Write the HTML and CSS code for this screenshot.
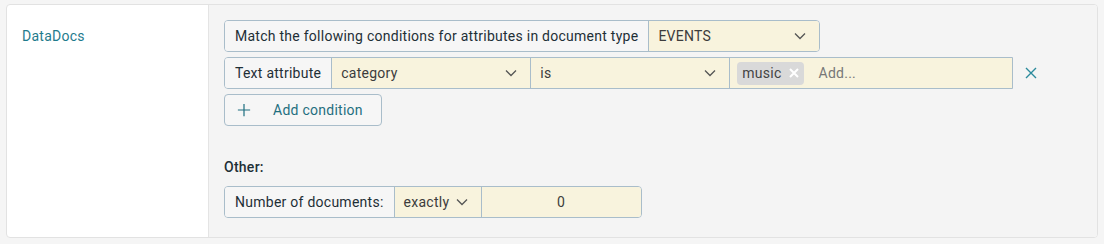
FILE: index.html
```html
<!DOCTYPE html>
<html>
<head>
    <title>DataDocs conditions</title>
    <link rel="stylesheet" href="styles.css">
</head>
<body>
    <div class="card">
        <div class="side">
            <a class="side-link" href="#">DataDocs</a>
        </div>
        <div class="main">
            <div class="group">
                <span class="addon addon-wide">Match the following conditions for attributes in document type</span>
                <span class="select select-type">EVENTS
                    <svg class="chev" viewBox="0 0 12 8"><path d="M1 1.5l5 5 5-5"/></svg>
                </span>
            </div>
            <div class="cond-row">
                <div class="group">
                    <span class="addon">Text attribute</span>
                    <span class="select select-attr">category
                        <svg class="chev" viewBox="0 0 12 8"><path d="M1 1.5l5 5 5-5"/></svg>
                    </span>
                    <span class="select select-attr">is
                        <svg class="chev" viewBox="0 0 12 8"><path d="M1 1.5l5 5 5-5"/></svg>
                    </span>
                    <span class="tags">
                        <span class="tag">music
                            <svg class="tag-x" viewBox="0 0 10 10"><path d="M1 1l8 8M9 1l-8 8"/></svg>
                        </span>
                        <span class="placeholder">Add...</span>
                    </span>
                </div>
                <svg class="remove" viewBox="0 0 12 12"><path d="M1 1l10 10M11 1l-10 10"/></svg>
            </div>
            <button class="btn-add">
                <svg class="plus" viewBox="0 0 16 16"><path d="M8 1v14M1 8h14"/></svg>
                Add condition
            </button>
            <div class="other-title">Other:</div>
            <div class="group">
                <span class="addon">Number of documents:</span>
                <span class="select select-count">exactly
                    <svg class="chev" viewBox="0 0 12 8"><path d="M1 1.5l5 5 5-5"/></svg>
                </span>
                <span class="num">0</span>
            </div>
        </div>
    </div>
</body>
</html>
```

FILE: styles.css
```css
body {
    margin: 0; background-color: #f5f5f5;
    font-family: Roboto, "Liberation Sans", sans-serif;
    font-size: 14px; letter-spacing: 0.26px; color: #1e2f36;
}
.card {
    display: flex; margin: 4px 6px 5px 6px; height: 232px;
    border: 1px solid #e2e2e2; border-radius: 4px;
    background-color: #fff; overflow: hidden;
}
.side {
    width: 202px; border-right: 1px solid #e4e4e4;
    padding: 15px 0 0 15px; box-sizing: border-box;
}
.side-link {
    display: block; line-height: 32px;
    color: #1f7b8d; text-decoration: none;
}
.main {
    flex: 1; background-color: #f4f4f4;
    padding: 15px 15px 0 15px;
}
.group {
    display: inline-flex; height: 32px;
    border: 1px solid #a9bdca; border-radius: 4px;
    box-sizing: border-box; overflow: hidden;
}
.addon {
    display: flex; align-items: center;
    padding: 0 10px; background-color: #f6f6f6;
    white-space: nowrap;
}
.select, .tags, .num {
    display: flex; align-items: center;
    background-color: #f8f3dd; border-left: 1px solid #a9bdca;
    color: #3c3c3c; box-sizing: border-box;
}
.select { padding: 0 13px 0 9px; justify-content: space-between; }
.select-type { width: 171px; }
.select-attr { width: 199px; }
.select-count { width: 87px; }
.chev {
    width: 12px; height: 8px; fill: none;
    stroke: #555; stroke-width: 1.3;
}
.cond-row { display: flex; align-items: center; margin-top: 5px; }
.cond-row .group { border-radius: 4px 0 0 4px; }
.tags { width: 283px; padding-left: 7px; gap: 15px; }
.tag {
    display: flex; align-items: center; gap: 7px;
    height: 23px; padding: 0 5px; border-radius: 4px;
    background-color: #d9d9d9; color: #444;
}
.tag-x { width: 10px; height: 10px; stroke: #fff; stroke-width: 2; }
.placeholder { color: #777; }
.remove {
    width: 12px; height: 12px; margin-left: 12px;
    stroke: #2b8a9c; stroke-width: 1.4;
}
.btn-add {
    display: flex; align-items: center;
    width: 158px; height: 32px; margin-top: 5px;
    padding: 0 0 0 12px; background-color: #f6f6f6;
    border: 1px solid #a9bdca; border-radius: 4px;
    font-family: inherit; font-size: 14px; letter-spacing: inherit;
    color: #1f6f80;
}
.plus {
    width: 14px; height: 14px; margin-right: 22px;
    stroke: #1f6f80; stroke-width: 1.4;
}
.other-title { margin: 33px 0 11px 0; font-weight: 500; }
.num { width: 160px; justify-content: center; }
```
